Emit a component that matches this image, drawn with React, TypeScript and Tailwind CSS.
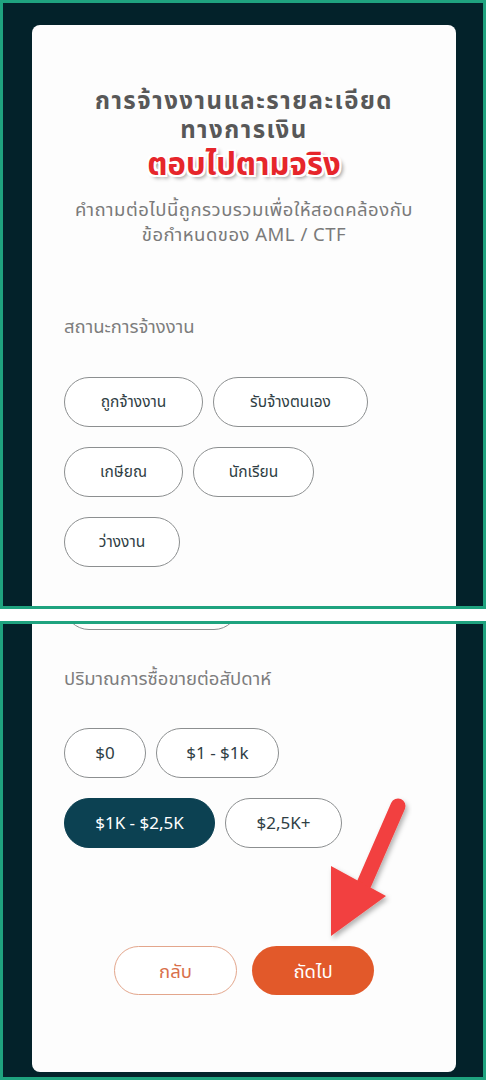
import React from 'react';

const employment = ['ถูกจ้างงาน', 'รับจ้างตนเอง', 'เกษียณ', 'นักเรียน', 'ว่างงาน'];
const employmentWidths = ['w-[139px]', 'w-[155px]', 'w-[119px]', 'w-[121px]', 'w-[116px]'];

const volumes = ['$0', '$1 - $1k', '$1K - $2,5K', '$2,5K+'];
const volumeWidths = ['w-[82px]', 'w-[123px]', 'w-[151px]', 'w-[117px]'];

const Pill: React.FC<{ label: string; width: string; size: string; selected?: boolean }> = ({
  label,
  width,
  size,
  selected,
}) => (
  <button
    className={`${width} ${size} h-[50px] rounded-full flex items-center justify-center ${
      selected
        ? 'bg-[#0c4152] text-white border-[1.5px] border-[#0c4152]'
        : 'bg-white text-[#2f3e44] border-[1.5px] border-[#8c8f90]'
    }`}
  >
    {label}
  </button>
);

export default function App() {
  return (
    <div className="relative w-[487px] h-[1080px] overflow-hidden bg-white font-['Noto_Sans','Noto_Sans_Thai','DejaVu_Sans',sans-serif]">
      {/* top screenshot */}
      <div className="w-[486px] h-[609px] border-[3px] border-[#1fa37f] bg-[#03222a] pt-[22px] pl-[29px] pr-[27px] flex flex-col">
        <div className="flex-1 bg-[#fdfdfd] rounded-t-[8px] px-[32px] pt-[60px]">
          <h1 className="text-center text-[24px] leading-[29px] tracking-[1.5px] font-bold text-[#585858]">
            <span className="block">การจ้างงานและรายละเอียด</span>
            <span className="block">ทางการเงิน</span>
          </h1>
          <p className="mt-[2px] text-center text-[31px] leading-[36px] font-bold text-[#e6262b] [text-shadow:0_0_2px_#fff,2px_2px_0_#fff,-2px_-2px_0_#fff,2px_-2px_0_#fff,-2px_2px_0_#fff,3px_3px_4px_rgba(0,0,0,0.45)]">
            ตอบไปตามจริง
          </p>
          <p className="mt-[15px] text-center text-[18.5px] leading-[25px] tracking-[0.5px] text-[#7a7a7a]">
            <span className="block">คำถามต่อไปนี้ถูกรวบรวมเพื่อให้สอดคล้องกับ</span>
            <span className="block">ข้อกำหนดของ AML / CTF</span>
          </p>
          <p className="mt-[68px] text-[18.5px] leading-[24px] text-[#7d7d7d]">สถานะการจ้างงาน</p>
          <div className="mt-[39px] flex flex-wrap gap-x-[10px] gap-y-[20px]">
            {employment.map((e, i) => (
              <Pill key={e} label={e} width={employmentWidths[i]} size="text-[15.5px]" />
            ))}
          </div>
        </div>
      </div>

      <div className="h-[12px]" />

      {/* bottom screenshot */}
      <div className="w-[486px] h-[459px] border-[3px] border-[#1fa37f] bg-[#03222a] pl-[29px] pr-[27px] pb-[5px] flex flex-col">
        <div className="flex-1 overflow-hidden bg-[#fdfdfd] rounded-b-[8px] px-[32px]">
          <div className="mt-[-44px] w-[175px] h-[50px] rounded-full border-[1.5px] border-[#8c8f90]" />
          <p className="mt-[36px] text-[18.5px] leading-[24px] text-[#7d7d7d]">ปริมาณการซื้อขายต่อสัปดาห์</p>
          <div className="mt-[38px] flex flex-wrap gap-x-[10px] gap-y-[20px]">
            {volumes.map((v, i) => (
              <Pill key={v} label={v} width={volumeWidths[i]} size="text-[17px]" selected={i === 2} />
            ))}
          </div>
          <div className="mt-[98px] flex justify-center gap-[15px]">
            <button className="w-[123px] h-[49px] rounded-full border-[1.5px] border-[#e3a68c] bg-white text-[18.5px] text-[#d9704a]">
              กลับ
            </button>
            <button className="w-[122px] h-[49px] rounded-full bg-[#e2592a] text-[18.5px] text-white">
              ถัดไป
            </button>
          </div>
        </div>
      </div>

      {/* annotation arrow */}
      <svg className="absolute left-0 top-0 pointer-events-none" width="487" height="1080" viewBox="0 0 487 1080">
        <defs>
          <filter id="sh" x="-20%" y="-20%" width="140%" height="140%">
            <feDropShadow dx="2" dy="3" stdDeviation="2.5" floodColor="#000" floodOpacity="0.3" />
          </filter>
        </defs>
        <g filter="url(#sh)" fill="#f2403f" stroke="none">
          <line x1="398" y1="806" x2="364" y2="884" stroke="#f2403f" strokeWidth="15" strokeLinecap="round" />
          <polygon points="331,866 386,896 331,936" />
        </g>
      </svg>
    </div>
  );
}
